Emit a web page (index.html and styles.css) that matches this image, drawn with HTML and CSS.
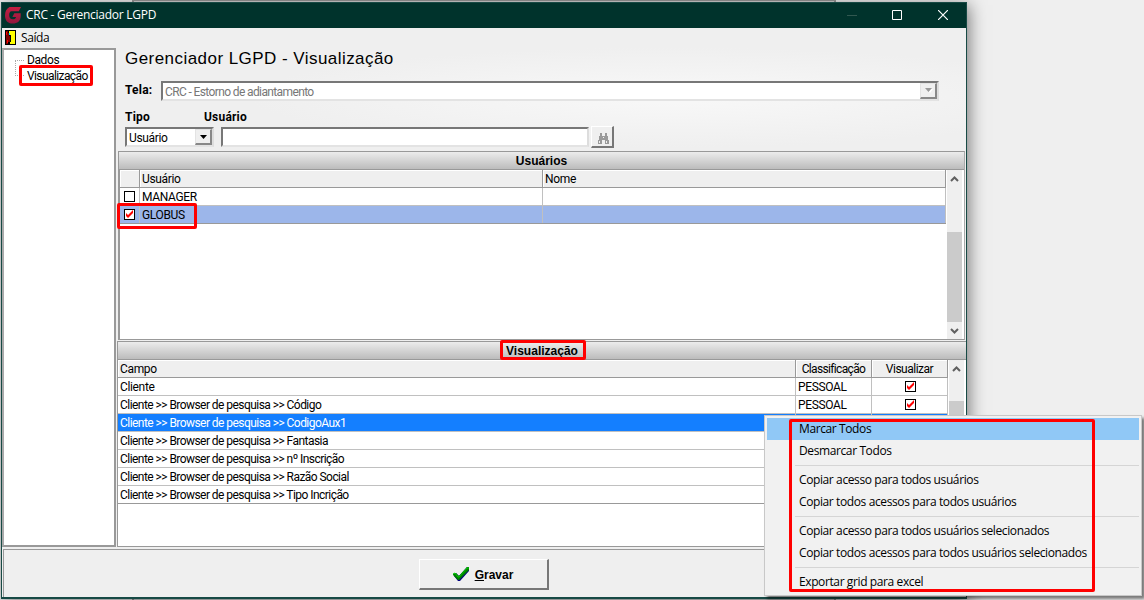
FILE: index.html
```
<!DOCTYPE html>
<html lang="pt-BR">
<head>
<meta charset="utf-8">
<title>CRC - Gerenciador LGPD</title>
<link rel="stylesheet" href="styles.css">
</head>
<body>
<div class="desktop">
  <div class="back-window"></div>
  <div class="window">
    <header class="titlebar">
      <svg class="logo" width="17" height="17" viewBox="0 0 17 17"><defs><linearGradient id="g" x1="0" y1="0" x2="0" y2="1"><stop offset="0" stop-color="#c51f42"/><stop offset="1" stop-color="#8f173d"/></linearGradient></defs><path fill="url(#g)" d="M4.500 0H16l-2.200 4.200H6.600C4.800 4.200 4.200 6 4.200 8c0 3 1.300 4.300 3.600 4.300 2 0 3-.9 3.200-2.400H7.400L9.300 6.300H15.700V9c0 5-3.200 7.600-8 7.600C2.700 16.600 0 13.500 0 8.500 0 4.500 1.500 1.500 4.500 0z"/></svg>
      <span class="title">CRC - Gerenciador LGPD</span>
      <div class="controls">
        <svg width="10" height="10"><path d="M0 5.500H10" stroke="#315850"/></svg>
        <svg width="10" height="10"><path d="M.5 .5h9v9h-9z" fill="none" stroke="#fff"/></svg>
        <svg width="10" height="10"><path d="M0 0L10 10M10 0L0 10" stroke="#fff" stroke-width="1.200"/></svg>
      </div>
    </header>
    <nav class="menubar">
      <svg width="11" height="15" viewBox="0 0 11 15" shape-rendering="crispEdges"><path d="M0 0h11v15H0z"/><path fill="#ff0" d="M4 1h6v13H5v-2h1V5H5V3H4z"/><path fill="#800000" d="M1 1h2v2h1v3h1v6H3v2H1z"/><path fill="#f00" d="M1 2h1v3H1zM2 10h1v3H2z"/><path fill="#0ff" d="M4 3h1v2H4z"/></svg>
      <span>Saída</span>
    </nav>
    <div class="workspace">
      <aside class="tree">
        <div class="branch"></div>
        <ul><li>Dados</li><li><span>Visualização</span></li></ul>
        <div class="mark mark-tree"></div>
      </aside>
      <main class="content">
        <section class="form">
          <h1>Gerenciador LGPD - Visualização</h1>
          <div class="line screen-line"><label>Tela:</label>
            <div class="field combo disabled"><span>CRC - Estorno de adiantamento</span><b class="drop"><svg width="8" height="5"><path fill="#fff" d="M2 1h6L5 5z"/><path fill="#999" d="M0 0h7L3.500 4z"/></svg></b></div></div>
          <div class="line labels"><label>Tipo</label><label>Usuário</label></div>
          <div class="line filters">
            <div class="field combo kind"><span>Usuário</span><b class="drop"><svg width="7" height="4"><path d="M0 0h7L3.500 4z"/></svg></b></div>
            <div class="field query"></div>
            <button class="raised find"><svg width="11" height="11" shape-rendering="crispEdges"><path fill="#999" d="M2 0h2v3h3V0h2v3h1v4h1v4H7V7H4v4H0V7h1V3h1z"/><path fill="#efefef" d="M5 4h1v1H5zM1 8h1v2H1zM8 8h1v2H8z"/></svg></button>
          </div>
        </section>
        <section class="users">
          <h2>Usuários</h2>
          <div class="grid-wrap">
            <div class="grid user-grid">
              <div class="row head"><span></span><span>Usuário</span><span>Nome</span></div>
              <div class="row"><span><i class="check"></i></span><span>MANAGER</span><span></span></div>
              <div class="row chosen"><span><i class="check"><svg width="9" height="9"><path d="M1 3v3l2 2 5-5V0L3 5z" fill="#f00"/></svg></i></span><span>GLOBUS</span><span></span></div>
            </div>
            <div class="scroll"><svg width="9" height="6"><path d="M1 5l3.500-3.500L8 5" /></svg><div class="thumb user-thumb"></div><svg width="9" height="6"><path d="M1 1l3.500 3.500L8 1"/></svg></div>
          </div>
          <div class="mark mark-user"></div>
        </section>
        <section class="fields">
          <h2><span>Visualização</span></h2>
          <div class="grid-wrap">
            <div class="grid field-grid">
              <div class="row head"><span>Campo</span><span class="center">Classificação</span><span class="center">Visualizar</span></div>
              <div class="row"><span>Cliente</span><span>PESSOAL</span><span><i class="check"><svg width="9" height="9"><path d="M1 3v3l2 2 5-5V0L3 5z" fill="#f00"/></svg></i></span></div>
              <div class="row"><span>Cliente &gt;&gt; Browser de pesquisa &gt;&gt; Código</span><span>PESSOAL</span><span><i class="check"><svg width="9" height="9"><path d="M1 3v3l2 2 5-5V0L3 5z" fill="#f00"/></svg></i></span></div>
              <div class="row active"><span>Cliente &gt;&gt; Browser de pesquisa &gt;&gt; CodigoAux1</span><span></span><span></span></div>
              <div class="row"><span>Cliente &gt;&gt; Browser de pesquisa &gt;&gt; Fantasia</span><span></span><span></span></div>
              <div class="row"><span>Cliente &gt;&gt; Browser de pesquisa &gt;&gt; nº Inscrição</span><span></span><span></span></div>
              <div class="row"><span>Cliente &gt;&gt; Browser de pesquisa &gt;&gt; Razão Social</span><span></span><span></span></div>
              <div class="row last"><span>Cliente &gt;&gt; Browser de pesquisa &gt;&gt; Tipo Incrição</span><span></span><span></span></div>
            </div>
            <div class="scroll"><svg width="9" height="6"><path d="M1 5l3.500-3.500L8 5"/></svg><div class="thumb field-thumb"></div></div>
          </div>
          <div class="mark mark-view"></div>
        </section>
      </main>
    </div>
    <footer class="actions">
      <button class="raised save"><svg width="17" height="16" viewBox="0 0 17 16"><path fill="#000080" d="M1 8l2-1 3 3L14 1h2v4L7 15H5L1 10z"/><path fill="#008000" d="M0 8l3-1 3 3 8-9h2v3L6 14H5L0 9z"/><path d="M0 8l2-1 3 4h1l8-9h2" fill="none" stroke="#00d000"/></svg><span><u>G</u>ravar</span></button>
    </footer>
  </div>
  <div class="popup">
    <div class="item hot">Marcar Todos</div>
    <div class="item">Desmarcar Todos</div>
    <hr>
    <div class="item">Copiar acesso para todos usuários</div>
    <div class="item">Copiar todos acessos para todos usuários</div>
    <hr>
    <div class="item">Copiar acesso para todos usuários selecionados</div>
    <div class="item">Copiar todos acessos para todos usuários selecionados</div>
    <hr>
    <div class="item">Exportar grid para excel</div>
    <div class="mark mark-popup"></div>
  </div>
</div>
</body>
</html>
```
FILE: styles.css
```
* { box-sizing: border-box; }
body { margin: 0; font: 12px/17px Roboto, sans-serif; letter-spacing: -.35px; color: #000; }
h1, h2, ul { margin: 0; padding: 0; list-style: none; }
.desktop { position: relative; width: 1144px; height: 600px; overflow: hidden; background: #efefef; }
.back-window { position: absolute; left: 132px; top: 0; width: 704px; height: 600px; border: solid #999; border-width: 1px 2px 0; background: #d8d8d8; }
.window { position: absolute; left: 1px; top: 2px; width: 966px; height: 597px; display: flex; flex-direction: column; border: 1px solid #174a45; border-bottom-width: 2px; background: #efefef; box-shadow: 2px 3px 16px rgba(0,0,0,.5); }
.titlebar { height: 25px; flex: none; display: flex; align-items: center; padding-left: 3px; background: #00332c; color: #fff; font: 12px/25px "Open Sans", sans-serif; }
.title { margin: -2px 0 0 4px; letter-spacing: -.27px; }
.controls { margin-left: auto; display: flex; gap: 35px; padding-right: 18px; }
.controls svg { position: relative; top: -1px; }
.controls svg:nth-child(2) { left: -1px; }
.controls svg:first-child { left: -1px; }
.menubar { height: 20px; flex: none; display: flex; align-items: center; padding-left: 3px; gap: 5px; font: 12px/20px "Open Sans", sans-serif; letter-spacing: -.4px; }
.menubar svg { margin-top: -2px; }
.workspace { height: 499px; flex: none; display: flex; }
.tree { position: relative; width: 114px; height: 499px; border: 2px solid #999; border-left-color: #aaa; background: #fff; display: flex; padding: 2px 0 0 11px; }
.tree ul { margin-left: 3px; letter-spacing: -.6px; line-height: 16px; }
.tree li:first-child { letter-spacing: -.4px; }
.branch { width: 9px; height: 16px; margin-top: 8px; border: dotted #aaa; border-width: 1px 0 1px 1px; }
.content { flex: 1; min-width: 0; display: flex; flex-direction: column; padding-left: 1px; }
.form { height: 103px; flex: none; padding: 1px 27px 0 8px; background: radial-gradient(ellipse 420px 50px at 65% 48%, #f8f8f8, #efefef); }
h1 { font: 17px/20px "Liberation Sans", Arial, sans-serif; letter-spacing: .45px; }
.line { display: flex; align-items: center; }
label { font-weight: bold; letter-spacing: .2px; }
.screen-line { height: 20px; margin-top: 12px; }
.screen-line label { width: 36px; margin-top: -2px; }
.field { height: 20px; border: 2px solid #777; border-right-color: #ddd; border-bottom-color: #e3e3e3; background: #fff; }
.combo { display: flex; padding-left: 2px; }
.combo span { flex: 1; line-height: 18px; }
.drop { width: 17px; display: flex; align-items: center; justify-content: center; background: #efefef; border: 1px solid #e3e3e3; border-right: 2px solid #888; border-bottom: 2px solid #888; }
.disabled { flex: 1; color: #777; letter-spacing: -.62px; }
.disabled .drop { padding-left: 1px; }
.labels { margin-top: 8px; height: 17px; }
.labels label:first-child { width: 79px; }
.filters { margin-top: 1px; height: 20px; }
.kind { width: 89px; }
.query { width: 368px; margin-left: 7px; }
.raised { border: 1px solid #fff; border-right: 2px solid #777; border-bottom: 2px solid #777; background: #efefef; padding: 0; display: flex; align-items: center; justify-content: center; }
.find { width: 23px; height: 22px; margin-left: 2px; padding: 4px 0 0 2px; }
.users { position: relative; flex: none; height: 189px; border: 1px solid #999; border-right-color: #aaa; margin-left: 1px; width: 847px; }
h2 { height: 18px; border-bottom: 1px solid #999; background: linear-gradient(#ececec, #bcbcbc); text-align: center; font: bold 12px/18px "Liberation Sans", Arial, sans-serif; letter-spacing: 0; }
.grid-wrap { display: flex; height: 169px; background: #fff; }
.grid { border-left: 1px solid #999; }
.row { display: grid; height: 18px; border-bottom: 1px solid #c0c0c0; }
.row > span { border-right: 1px solid #c0c0c0; padding-left: 2px; line-height: 18px; white-space: nowrap; overflow: hidden; }
.row > .center { text-align: center; padding: 0; letter-spacing: -.65px; }
.row > .center:last-child { letter-spacing: -.5px; }
.head { background: #efefef; border-color: #999; }
.head > span { border-color: #999; box-shadow: inset 1px 1px #fff; }
.user-grid { width: 827px; }
.user-grid .row { grid-template-columns: 20px 403px 403px; }
.user-grid .row > span:first-child { padding-left: 4px; }
.chosen { background: #9cb6ea; border-color: #999; }
.check { display: flex; width: 11px; height: 11px; margin: 3px auto; border: 1px solid #000; background: #fff; }
.user-grid .check { margin: 3px 0; }
.scroll { width: 15px; margin-left: 1px; background: #efefef; display: flex; flex-direction: column; align-items: center; padding-top: 6px; }
.scroll path { fill: none; stroke: #606060; stroke-width: 2; }
.thumb { width: 15px; background: #cbcbcb; }
.user-thumb { height: 90px; margin: 50px 0 6px; }
.fields { position: relative; flex: none; height: 206px; margin-top: 1px; border: 1px solid #999; border-right: 0; }
.fields .grid-wrap { height: 186px; }
.field-grid { width: 830px; border-left: 0; }
.field-grid .row { grid-template-columns: 678px 76px 76px; }
.field-grid .row:nth-child(n+3) > span:first-child { letter-spacing: -.55px; }
.active { background: #147fff; color: #fff; }
.last { border-color: #999; }
.field-thumb { height: 80px; margin-top: 29px; }
.actions { flex: none; height: 48px; margin: 2px 1px 0; display: flex; justify-content: center; padding: 9px 2px 0 0; border: solid #999; border-width: 1px 0 0 1px; }
.save { width: 130px; height: 31px; gap: 5px; font: bold 12px/17px "Liberation Sans", Arial, sans-serif; }
.save span { padding-top: 2px; }
.mark { position: absolute; border: 3px solid #f00; border-radius: 2px; }
.mark-tree { left: 15px; top: 15px; width: 74px; height: 21px; }
.mark-user { left: -2px; top: 51px; width: 80px; height: 26px; }
.mark-view { left: 382px; top: -2px; width: 86px; height: 20px; }
.popup { position: absolute; left: 764px; top: 415px; width: 378px; height: 181px; border: 1px solid #c8c8c8; padding: 2px; background: #f1f1f1; box-shadow: 3px 3px 3px rgba(0,0,0,.5); font: 12px/22px "Open Sans", sans-serif; }
.item { height: 22px; padding-left: 32px; letter-spacing: -.39px; white-space: nowrap; }
.hot { background: #90c8f6; }
hr { height: 1px; margin: 3px 0 3px 28px; border: 0; background: #d5d5d5; }
.mark-popup { left: 24px; top: 3px; width: 306px; height: 173px; }
```
